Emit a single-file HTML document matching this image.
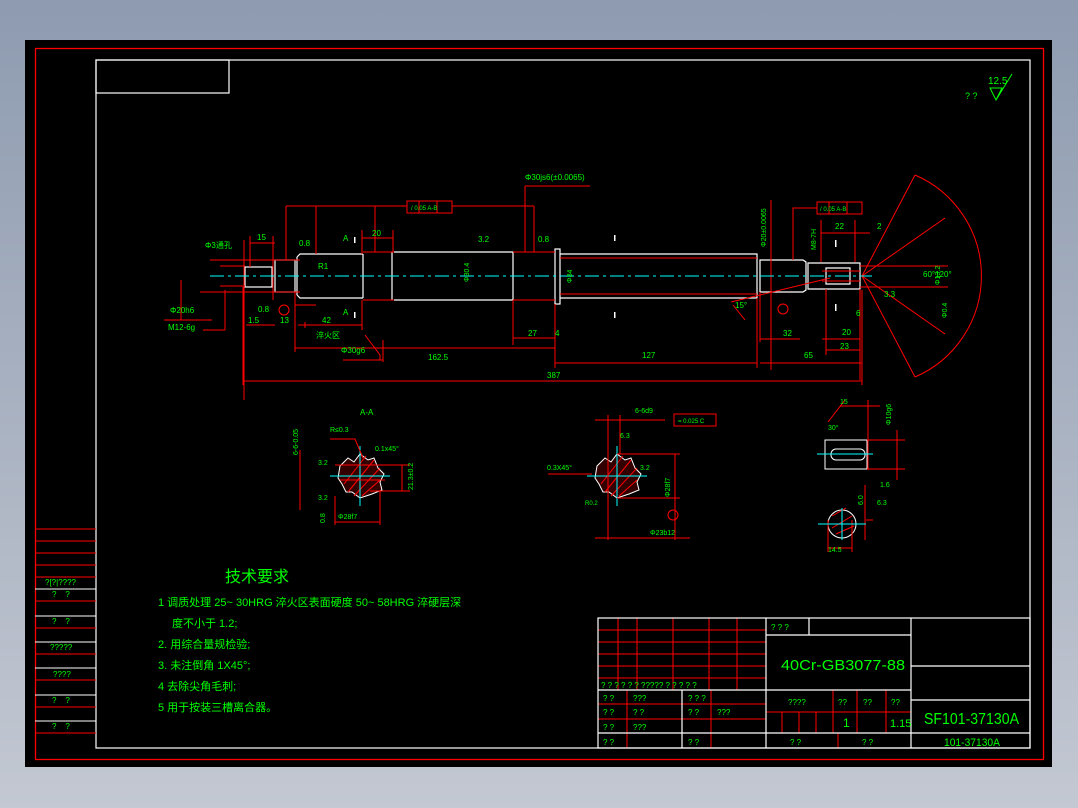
<!DOCTYPE html>
<html><head><meta charset="utf-8"><style>
html,body{margin:0;padding:0;background:#8f9cb1;}
body{width:1078px;height:808px;overflow:hidden;position:relative;background:linear-gradient(#8e9bb0,#c3c8d2);}
svg{position:absolute;left:0;top:0;}
text{font-family:"Liberation Sans","Noto Sans CJK SC",sans-serif;fill:#00ff00;}
</style></head><body>
<svg width="1078" height="808" viewBox="0 0 1078 808">
<rect x="25" y="40" width="1027" height="727" fill="#000"/>
<rect x="35.5" y="48.5" width="1008" height="711" fill="none" stroke="#f00" stroke-width="1.3"/>
<g fill="none" stroke="#fff" stroke-width="1.2">
<rect x="96" y="60" width="934" height="688"/>
<rect x="96" y="60" width="133" height="33"/>
</g>
<g stroke="#f00" stroke-width="1">
<line x1="35" y1="529" x2="96" y2="529"/><line x1="35" y1="541" x2="96" y2="541"/>
<line x1="35" y1="553" x2="96" y2="553"/><line x1="35" y1="565" x2="96" y2="565"/>
<line x1="35" y1="577" x2="96" y2="577"/><line x1="35" y1="601" x2="96" y2="601"/>
<line x1="35" y1="628" x2="96" y2="628"/><line x1="35" y1="654" x2="96" y2="654"/>
<line x1="35" y1="680" x2="96" y2="680"/><line x1="35" y1="707" x2="96" y2="707"/>
<line x1="35" y1="733" x2="96" y2="733"/>
</g>
<g stroke="#fff" stroke-width="1">
<line x1="35" y1="589" x2="96" y2="589"/><line x1="35" y1="616" x2="96" y2="616"/>
<line x1="35" y1="642" x2="96" y2="642"/><line x1="35" y1="668" x2="96" y2="668"/>
<line x1="35" y1="695" x2="96" y2="695"/><line x1="35" y1="721" x2="96" y2="721"/>
</g>
<g font-size="8">
<text x="45" y="585">?[?|????</text><text x="52" y="597">?&#160;&#160;&#160;&#160;?</text>
<text x="52" y="624">?&#160;&#160;&#160;&#160;?</text><text x="50" y="650">?????</text>
<text x="53" y="677">????</text><text x="52" y="703">?&#160;&#160;&#160;&#160;?</text>
<text x="52" y="729">?&#160;&#160;&#160;&#160;?</text>
</g>
<text x="988" y="84" font-size="10">12.5</text>
<text x="965" y="99" font-size="9">? ?</text>
<path d="M990 88 L1002 88 L996 100 Z M996 100 L1012 74" fill="none" stroke="#0f0"/>
<g fill="none" stroke="#fff" stroke-width="1.2">
<rect x="245" y="267" width="27" height="20"/>
<rect x="275" y="260" width="20" height="32"/>
<path d="M297 257 L300 254 L363 254 M297 295 L300 298 L363 298 M297 257 L297 295"/>
<path d="M363 254 L363 298 M392 252 L392 300 M394 252 L513 252 L513 300 L394 300"/>
<rect x="555" y="249" width="5" height="55"/>
<path d="M560 254 L757 254 L757 298 L560 298 M760 260 L803 260 L806 262 L806 290 L803 292 L760 292 Z"/>
<path d="M808 263 L860 263 L860 289 L808 289 Z M826 268 L850 268 L850 284 L826 284 Z"/>
</g>
<g fill="none" stroke="#f00" stroke-width="1">
<path d="M363 252 L394 252 M363 300 L394 300 M513 252 L555 252 M513 300 L555 300 M560 258 L757 258 M560 294 L757 294"/>
<path d="M210 260 L300 260 M200 292 L300 292 M220 266 L245 266 M220 286 L245 286"/>
<path d="M822 271 L860 271 M822 281 L860 281 M860 266 L948 266 M860 287 L948 287"/>
<rect x="407" y="201" width="45" height="12"/><line x1="419" y1="201" x2="419" y2="213"/><line x1="437" y1="201" x2="437" y2="213"/>
<rect x="817" y="202" width="45" height="12"/><line x1="829" y1="202" x2="829" y2="214"/><line x1="847" y1="202" x2="847" y2="214"/>
<path d="M286 206 L407 206 M452 206 L534 206 M286 206 L286 260 M316 206 L316 254 M375 206 L375 252 M534 206 L534 252 M525 186 L590 186 M525 186 L525 252"/>
<path d="M817 208 L793 208 L793 260 M771 200 L771 370"/>
<path d="M243 381 L862 381 M243 287 L243 385 M862 290 L862 385 M295 348 L555 348 M295 292 L295 352 M555 304 L555 368 M555 363 L757 363 M757 298 L757 368 M760 363 L862 363 M862 363 L862 381"/>
<path d="M250 243 L275 243 M250 236 L250 267 M273 236 L273 300 M246 325 L275 325 M298 325 L362 325 M362 300 L362 330"/>
<path d="M362 238 L393 238 M362 230 L362 254 M393 230 L393 252 M513 338 L555 338 M513 300 L513 345 M760 339 L800 339 M760 292 L760 342"/>
<path d="M821 233 L870 233 M821 220 L821 262 M855 220 L855 262 M822 339 L860 339 M826 350 L860 350 M826 289 L826 355 M860 289 L860 380"/>
<path d="M244 240 L244 400 M181 280 L181 320 M164 320 L212 320 M225 330 L225 290 M203 330 L225 330"/>
<path d="M305 322 L305 328 M295 305 L316 305"/>
<circle cx="284" cy="310" r="5"/><circle cx="783" cy="309" r="5"/>
<path d="M365 335 L380 355 L380 360 M343 360 L383 360 M383 340 L383 362"/>
<path d="M862 276 L915 175 M862 276 L945 218 M862 276 L945 334 M862 276 L915 377 M915 175 A110 110 0 0 1 915 377"/>
<path d="M733 305 L745 320 M731 302 L830 278"/>
</g>
<line x1="210" y1="276" x2="872" y2="276" stroke="#0ff" stroke-dasharray="14,4,3,4" stroke-width="1"/>
<g fill="#fff"><rect x="354" y="237" width="1.5" height="6"/><rect x="354" y="312" width="1.5" height="6"/>
<rect x="614" y="235" width="1.5" height="6"/><rect x="614" y="312" width="1.5" height="6"/>
<rect x="835" y="240" width="1.5" height="7"/><rect x="835" y="304" width="1.5" height="7"/></g>
<g font-size="8">
<text x="525" y="180">Φ30js6(±0.0065)</text>
<text x="411" y="210" font-size="6">/ 0.05  A-B</text>
<text x="820" y="211" font-size="6">/ 0.05 A-B</text>
<text x="257" y="240">15</text><text x="372" y="236">20</text><text x="318" y="269">R1</text>
<text x="205" y="248">Φ3通孔</text>
<text x="299" y="246">0.8</text><text x="478" y="242">3.2</text><text x="538" y="242">0.8</text>
<text x="343" y="241">A</text><text x="343" y="315">A</text>
<text x="248" y="323">1.5</text><text x="280" y="323">13</text><text x="322" y="323">42</text>
<text x="316" y="338">淬火区</text><text x="341" y="353">Φ30g6</text>
<text x="170" y="313">Φ20h6</text><text x="168" y="330">M12-6g</text>
<text x="258" y="312">0.8</text>
<text x="428" y="360">162.5</text><text x="547" y="378">387</text>
<text x="528" y="336">27</text><text x="555" y="336">4</text>
<text x="642" y="358">127</text><text x="804" y="358">65</text><text x="783" y="336">32</text>
<text x="835" y="229">22</text><text x="877" y="229">2</text>
<text x="884" y="297">3.3</text><text x="856" y="316">6</text><text x="842" y="335">20</text><text x="840" y="349">23</text>
<text x="923" y="277">60°120°</text><text x="735" y="308">15°</text>
</g>
<g font-size="7">
<text transform="translate(469,282) rotate(-90)">Φ30.4</text>
<text transform="translate(572,283) rotate(-90)">Φ34</text>
<text transform="translate(766,247) rotate(-90)">Φ20±0.0065</text>
<text transform="translate(816,250) rotate(-90)">M8-7H</text>
<text transform="translate(940,285) rotate(-90)">Φ13.2</text>
<text transform="translate(947,318) rotate(-90)">Φ0.4</text>
</g>
<text x="360" y="415" font-size="8">A-A</text>
<g transform="translate(360,476)">
<path d="M-20,-10 L-12,-18 L-6,-14 L0,-22 L8,-16 L14,-18 L18,-8 L24,-2 L20,6 L22,14 L12,18 L6,20 L0,22 L-8,16 L-14,16 L-18,8 L-22,2 Z" fill="#300" stroke="#fff"/>
<path d="M-16,8 L6,-20 M-12,16 L14,-16 M-6,20 L20,-8 M2,20 L20,4" stroke="#f00"/>
<path d="M-30,0 L30,0 M0,-30 L0,30" stroke="#0ff"/>
</g>
<g fill="none" stroke="#f00"><path d="M300 450 L300 510 M340 480 L385 480 M335 465 L410 465 M370 491 L410 491 M402 465 L402 491 M335 496 L335 525 M335 522 L380 522 M380 490 L380 525 M330 439 L355 439 L363 458"/></g>
<g font-size="7"><text x="330" y="432">R≤0.3</text><text x="375" y="451">0.1x45°</text>
<text x="318" y="465">3.2</text><text x="318" y="500">3.2</text><text x="338" y="519">Φ28f7</text>
<text transform="translate(298,455) rotate(-90)">6-6-0.05</text>
<text transform="translate(413,490) rotate(-90)">21.3±0.2</text>
<text transform="translate(325,523) rotate(-90)">0.8</text></g>
<g transform="translate(617,476)">
<path d="M-20,-10 L-12,-18 L-6,-14 L0,-22 L8,-16 L14,-18 L18,-8 L24,-2 L20,6 L22,14 L12,18 L6,20 L0,22 L-8,16 L-14,16 L-18,8 L-22,2 Z" fill="#300" stroke="#fff"/>
<path d="M-16,8 L6,-20 M-12,16 L14,-16 M-6,20 L20,-8 M2,20 L20,4" stroke="#f00"/>
<path d="M-30,0 L30,0 M0,-30 L0,30" stroke="#0ff"/>
</g>
<g fill="none" stroke="#f00"><path d="M595 420 L665 420 M608 415 L608 540 M620 415 L620 454 M595 538 L690 538 M675 454 L675 540 M617 454 L680 454 M617 498 L680 498 M548 474 L592 474"/>
<rect x="674" y="414" width="42" height="12"/><circle cx="673" cy="515" r="5"/></g>
<g font-size="7"><text x="635" y="413">6-6d9</text><text x="678" y="423" font-size="6">= 0.025 C</text>
<text x="620" y="438">6.3</text><text x="547" y="470">0.3X45°</text><text x="640" y="470">3.2</text>
<text x="650" y="535">Φ23b12</text><text x="585" y="505" font-size="6">R0.2</text>
<text transform="translate(670,497) rotate(-90)">Φ28f7</text></g>
<g fill="none" stroke="#fff"><rect x="825" y="440" width="42" height="29"/><rect x="831" y="449" width="34" height="11" rx="5"/>
<circle cx="842" cy="524" r="14"/></g>
<g fill="none" stroke="#f00"><path d="M840 406 L880 406 M868 400 L868 470 M867 440 L905 440 M867 469 L905 469 M897 430 L897 480 M828 422 L845 400 M866 520 L873 520 M865 485 L865 540 M828 520 L828 552 M852 520 L852 552 M828 548 L852 548"/>
<path d="M832 516 L846 508 M832 528 L852 516 M836 534 L854 526" /></g>
<line x1="817" y1="454" x2="873" y2="454" stroke="#0ff"/><line x1="818" y1="524" x2="866" y2="524" stroke="#0ff"/><line x1="842" y1="508" x2="842" y2="540" stroke="#0ff"/>
<g font-size="7"><text x="840" y="404">15</text><text x="828" y="430">30°</text><text x="880" y="487">1.6</text><text x="877" y="505">6.3</text>
<text x="828" y="552">14.5</text><text transform="translate(891,425) rotate(-90)">Φ10g6</text><text transform="translate(863,505) rotate(-90)">6.0</text></g>
<g font-family="Liberation Sans,Noto Sans CJK SC,sans-serif">
<text x="225" y="582" font-size="16">技术要求</text>
<text x="158" y="606" font-size="11">1  调质处理 25~ 30HRG  淬火区表面硬度 50~ 58HRG  淬硬层深</text>
<text x="172" y="627" font-size="11">度不小于 1.2;</text>
<text x="158" y="648" font-size="11">2. 用综合量规检验;</text>
<text x="158" y="669" font-size="11">3. 未注倒角 1X45°;</text>
<text x="158" y="690" font-size="11">4  去除尖角毛刺;</text>
<text x="158" y="711" font-size="11">5  用于按装三槽离合器。</text>
</g>
<g stroke="#f00" stroke-width="1" fill="none">
<path d="M598 630 L766 630 M598 642 L766 642 M598 654 L766 654 M598 666 L766 666 M598 678 L766 678 M598 704 L766 704 M598 719 L766 719 M598 733 L766 733"/>
<path d="M618 618 L618 690 M637 618 L637 690 M673 618 L673 690 M709 618 L709 690 M737 618 L737 690 M627 690 L627 748 M711 690 L711 748"/>
<path d="M766 712 L911 712 M782 712 L782 733 M799 712 L799 733 M816 712 L816 733 M833 690 L833 733 M857 690 L857 733 M886 690 L886 733 M838 733 L838 748"/>
</g>
<g stroke="#fff" stroke-width="1.2" fill="none">
<rect x="598" y="618" width="432" height="130"/>
<path d="M598 690 L911 690 M682 690 L682 748 M766 618 L766 748 M766 635 L911 635 M809 618 L809 635 M911 618 L911 748 M911 666 L1030 666 M911 700 L1030 700 M911 733 L1030 733 M598 733 L911 733"/>
</g>
<g font-size="8">
<text x="771" y="630">? ? ?</text>
<text x="601" y="688">? ?    ? ?     ? ?     ?????     ? ?    ? ? ?</text>
<text x="603" y="701">?  ?</text><text x="633" y="701">???</text><text x="688" y="701">? ? ?</text>
<text x="603" y="715">?  ?</text><text x="633" y="715">?  ?</text><text x="688" y="715">?  ?</text><text x="717" y="715">???</text>
<text x="603" y="730">?  ?</text><text x="633" y="730">???</text>
<text x="603" y="745">?  ?</text><text x="688" y="745">?  ?</text>
<text x="788" y="705">????</text><text x="838" y="705">??</text><text x="863" y="705">??</text><text x="891" y="705">??</text>
<text x="790" y="745">?      ?</text><text x="862" y="745">?     ?</text>
</g>
<text x="781" y="670" font-size="15" textLength="124" lengthAdjust="spacingAndGlyphs">40Cr-GB3077-88</text>
<text x="843" y="727" font-size="12">1</text><text x="890" y="727" font-size="11">1.15</text>
<text x="924" y="724" font-size="16" textLength="95" lengthAdjust="spacingAndGlyphs">SF101-37130A</text>
<text x="944" y="746" font-size="11" textLength="56" lengthAdjust="spacingAndGlyphs">101-37130A</text>
</svg>
</body></html>
